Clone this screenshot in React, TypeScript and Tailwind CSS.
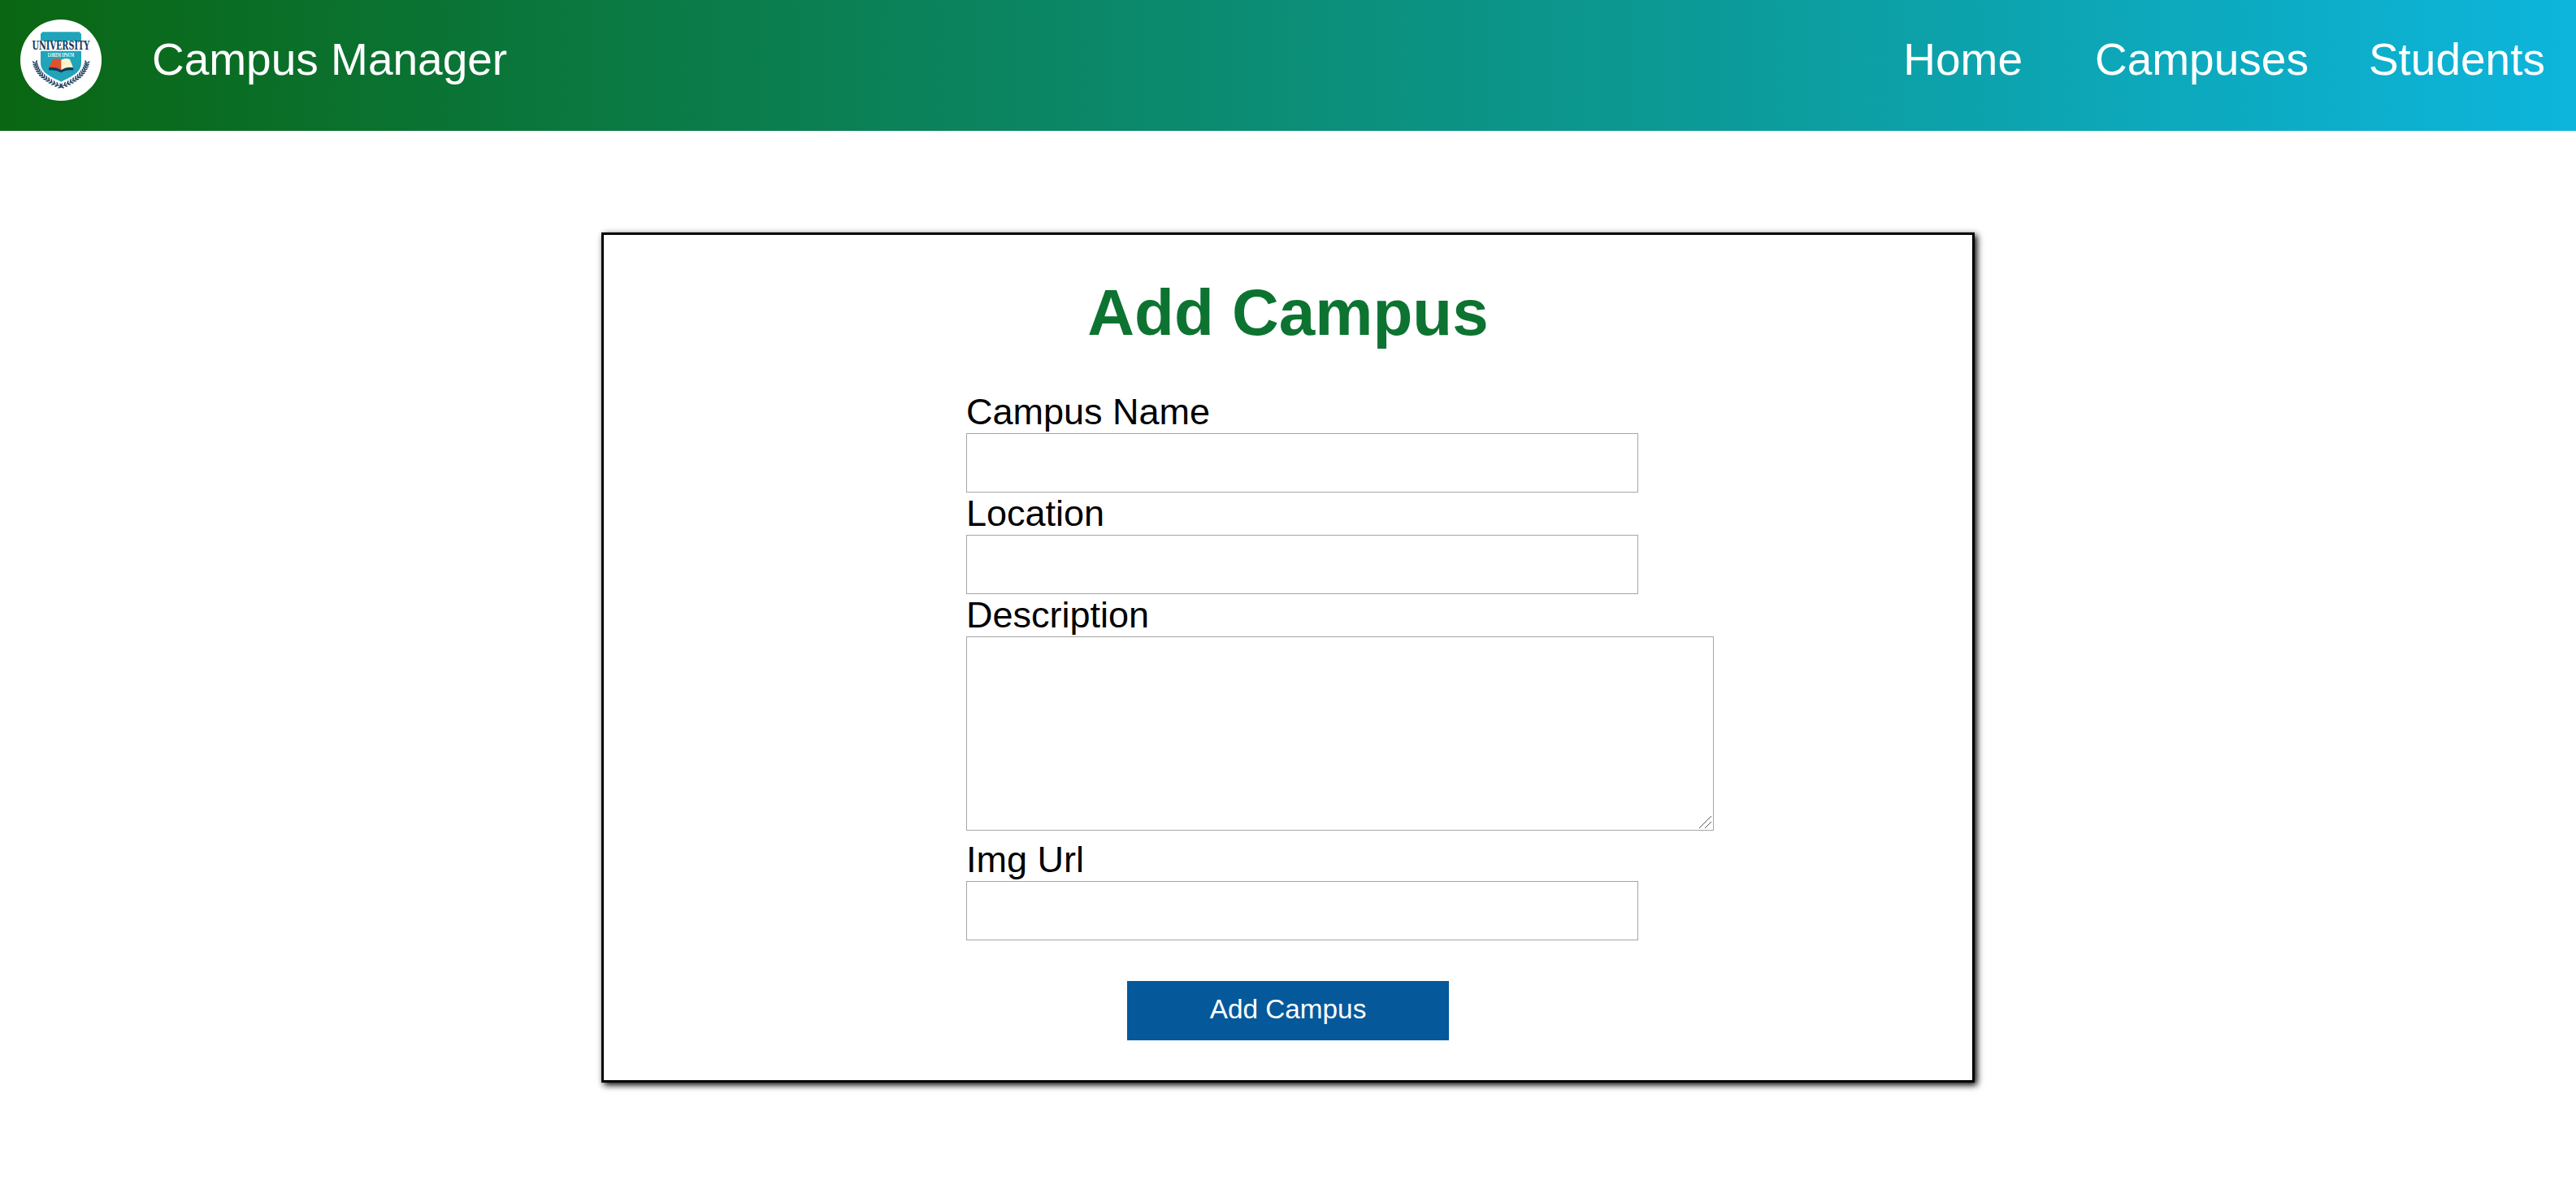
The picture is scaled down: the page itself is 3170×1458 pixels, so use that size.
import React from "react";

const leaves = [0, 1, 2, 3, 4, 5, 6, 7, 8, 9, 10, 11, 12, 13];

function Branch() {
  return (
    <g>
      <path d="M18.500 54 C21 67 33 76.500 53 83.500" fill="none" stroke="#17385a" strokeWidth="0.9" />
      {leaves.map((i) => {
        const t = i / 13.6;
        const u = 1 - t;
        const x = u * u * u * 18.5 + 3 * u * u * t * 21 + 3 * u * t * t * 33 + t * t * t * 53;
        const y = u * u * u * 54 + 3 * u * u * t * 67 + 3 * u * t * t * 76.5 + t * t * t * 83.5;
        const turn = 76 - t * 56;
        return (
          <g key={i} transform={`translate(${x} ${y}) rotate(${turn})`} fill="#17385a">
            <ellipse cx="-1.6" cy="-1.600" rx="2.2" ry="0.8" transform="rotate(42 -1.6 -1.6)" />
            <ellipse cx="-1.6" cy="1.600" rx="2.2" ry="0.8" transform="rotate(-42 -1.6 1.6)" />
          </g>
        );
      })}
    </g>
  );
}

function Logo() {
  return (
    <svg viewBox="0 0 100 100" className="size-[100px] shrink-0" role="img" aria-label="University">
      <circle cx="50" cy="50" r="50" fill="#fff" />
      <path d="M27 15.3 H73 Q73.4 17 75 17.4 V53 C75 65 64 70 50.3 76.5 C36 70 25 65 25 53 V17.4 Q26.6 17 27 15.3 Z" fill="#1fa4b9" />
      <rect x="13" y="26.3" width="74" height="12.4" fill="#fff" />
      <g fontFamily="'DejaVu Serif', serif" fontWeight="700">
        <text transform="translate(14.5 37.4) scale(0.66 1)" fontSize="14" textLength="107" lengthAdjust="spacingAndGlyphs" fill="#17385a">UNIVERSITY</text>
        <text transform="translate(33.8 46.1) scale(0.56 1)" fontSize="6.8" textLength="58" lengthAdjust="spacingAndGlyphs" fill="#e6fafa">LOREM IPSUM</text>
      </g>
      <path d="M35.2 58.5 Q43 57.5 50.3 61.5 Q57 57.5 65.2 58.5 V62.4 Q56.5 61.5 50.3 65.2 Q43.5 61.5 35.2 62.4 Z" fill="#17385a" />
      <path d="M40 48.8 Q46 47 50.3 49.8 V62 Q43 57.8 35.3 59.2 Z" fill="#e2502e" />
      <path d="M60.8 48.8 Q54.5 47 50.3 49.8 V62 Q57 57.8 65 59.2 Z" fill="#fcf6cc" />
      <Branch />
      <g transform="translate(100.3 0) scale(-1 1)">
        <Branch />
      </g>
    </svg>
  );
}

function Field({ id, label }: { id: string; label: string }) {
  return (
    <div className="flex flex-col">
      <label htmlFor={id} className="h-[52px] text-[45px] leading-[52px]">{label}</label>
      <input id={id} className="h-[73px] w-[827px] border border-[#a6a6a6] bg-white px-4 text-[33px] outline-none" />
    </div>
  );
}

export default function App() {
  return (
    <div className="min-h-[1458px] bg-white font-['Liberation_Sans',Arial,sans-serif] text-black">
      <header className="flex h-[161px] items-start bg-linear-to-r/srgb from-[#0a6612] to-[#0db5dc] pt-6 pr-[38px] pl-[25px] text-[55px] leading-[62px] text-white">
        <Logo />
        <a className="mt-[18px] ml-[62px]">Campus Manager</a>
        <nav className="mt-[18px] ml-auto flex">
          <a className="mr-[89px]">Home</a>
          <a className="mr-[74px]">Campuses</a>
          <a>Students</a>
        </nav>
      </header>
      <main className="mx-auto mt-[125px] flex h-[1046px] w-[1690px] flex-col items-center border-[3px] border-black bg-white shadow-[3px_3px_8px_#000]">
        <h1 className="mt-[50px] h-[92px] text-[80px] leading-[92px] font-bold text-[#0d7331]">Add Campus</h1>
        <form className="mt-[50px] flex w-full flex-col pl-[446px]">
          <Field id="name" label="Campus Name" />
          <Field id="location" label="Location" />
          <label htmlFor="description" className="h-[52px] text-[45px] leading-[52px]">Description</label>
          <div className="relative h-[239px] w-[920px]">
            <textarea id="description" className="block size-full resize-none border border-[#a6a6a6] bg-white p-4 text-[33px] outline-none" />
            <svg viewBox="0 0 15 15" className="absolute right-[3px] bottom-[3px] size-[15px]" shapeRendering="crispEdges" stroke="#555" strokeWidth="1">
              <path d="M0 15 L15 0 M7 15 L15 7" />
            </svg>
          </div>
          <div className="mt-2.5">
            <Field id="img" label="Img Url" />
          </div>
        </form>
        <button className="mt-[50px] h-[73px] w-[396px] bg-[#05599b] pb-[3px] text-[33.33px] text-white">Add Campus</button>
      </main>
    </div>
  );
}
